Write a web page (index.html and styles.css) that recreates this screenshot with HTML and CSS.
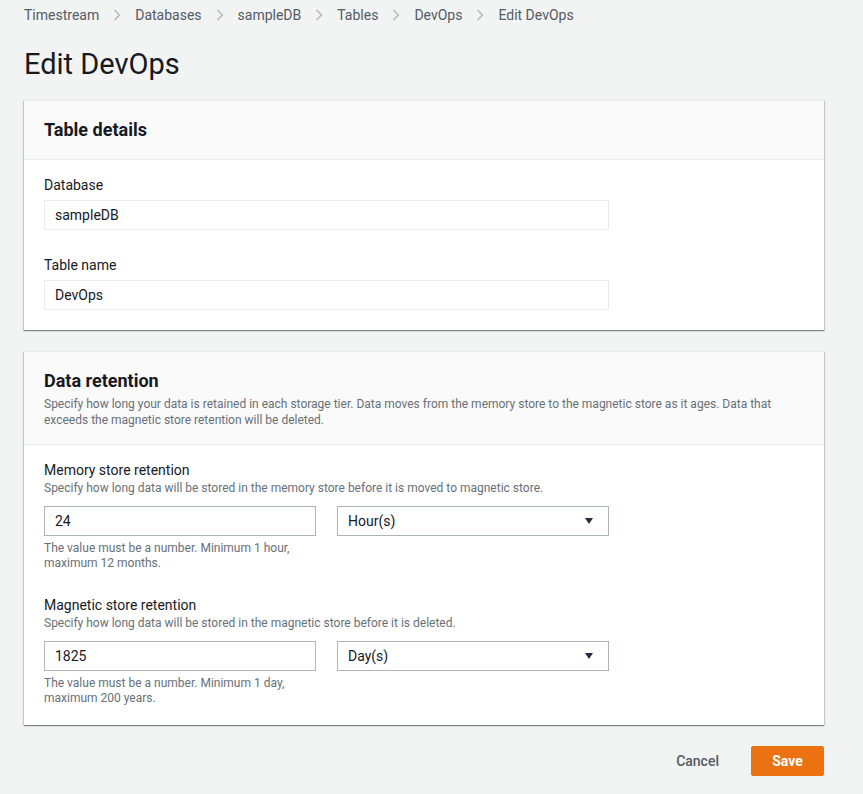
FILE: index.html
```html
<!DOCTYPE html>
<html lang="en">
<head>
<meta charset="utf-8">
<title>Edit DevOps</title>
<link rel="stylesheet" href="styles.css">
</head>
<body>
<div class="page">
  <nav class="breadcrumb">
    <span class="crumb">Timestream</span>
    <span class="sep"><svg width="8" height="12" viewBox="0 0 8 12"><path d="M1.5 1 L6.5 6 L1.5 11" fill="none" stroke="#aab7b8" stroke-width="1.3"/></svg></span>
    <span class="crumb">Databases</span>
    <span class="sep"><svg width="8" height="12" viewBox="0 0 8 12"><path d="M1.5 1 L6.5 6 L1.5 11" fill="none" stroke="#aab7b8" stroke-width="1.3"/></svg></span>
    <span class="crumb">sampleDB</span>
    <span class="sep"><svg width="8" height="12" viewBox="0 0 8 12"><path d="M1.5 1 L6.5 6 L1.5 11" fill="none" stroke="#aab7b8" stroke-width="1.3"/></svg></span>
    <span class="crumb">Tables</span>
    <span class="sep"><svg width="8" height="12" viewBox="0 0 8 12"><path d="M1.5 1 L6.5 6 L1.5 11" fill="none" stroke="#aab7b8" stroke-width="1.3"/></svg></span>
    <span class="crumb">DevOps</span>
    <span class="sep"><svg width="8" height="12" viewBox="0 0 8 12"><path d="M1.5 1 L6.5 6 L1.5 11" fill="none" stroke="#aab7b8" stroke-width="1.3"/></svg></span>
    <span class="crumb current">Edit DevOps</span>
  </nav>

  <h1 class="title">Edit DevOps</h1>

  <section class="panel">
    <div class="panel-header">
      <h2 class="panel-title">Table details</h2>
    </div>
    <div class="panel-body">
      <div class="field">
        <div class="label">Database</div>
        <div class="input readonly wide">sampleDB</div>
      </div>
      <div class="field spaced">
        <div class="label">Table name</div>
        <div class="input readonly wide">DevOps</div>
      </div>
    </div>
  </section>

  <section class="panel second">
    <div class="panel-header tall">
      <h2 class="panel-title">Data retention</h2>
      <p class="panel-desc">Specify how long your data is retained in each storage tier. Data moves from the memory store to the magnetic store as it ages. Data that exceeds the magnetic store retention will be deleted.</p>
    </div>
    <div class="panel-body retention">
      <div class="field">
        <div class="label">Memory store retention</div>
        <div class="desc">Specify how long data will be stored in the memory store before it is moved to magnetic store.</div>
        <div class="row">
          <div class="input half">24</div>
          <div class="input half select">Hour(s)<svg class="caret" width="8" height="6" viewBox="0 0 8 6"><path d="M0 0 H8 L4 6 Z" fill="#232f3e"/></svg></div>
        </div>
        <div class="help">The value must be a number. Minimum 1 hour,<br>maximum 12 months.</div>
      </div>
      <div class="field spaced2">
        <div class="label">Magnetic store retention</div>
        <div class="desc">Specify how long data will be stored in the magnetic store before it is deleted.</div>
        <div class="row">
          <div class="input half">1825</div>
          <div class="input half select">Day(s)<svg class="caret" width="8" height="6" viewBox="0 0 8 6"><path d="M0 0 H8 L4 6 Z" fill="#232f3e"/></svg></div>
        </div>
        <div class="help">The value must be a number. Minimum 1 day,<br>maximum 200 years.</div>
      </div>
    </div>
  </section>

  <div class="actions">
    <button class="btn-link">Cancel</button>
    <button class="btn-primary">Save</button>
  </div>
</div>
</body>
</html>
```

FILE: styles.css
```css
* { box-sizing: border-box; }
html, body { margin: 0; padding: 0; }
body {
  background: #f2f3f3;
  font-family: Roboto, "Liberation Sans", Arial, sans-serif;
  color: #16191f;
}
.page {
  width: 800px;
  margin-left: 24px;
  padding-top: 5px;
}
.breadcrumb {
  display: flex;
  align-items: center;
  height: 20px;
  font-size: 14px;
  line-height: 20px;
  color: #545b64;
}
.crumb { color: #545b64; }
.sep {
  display: inline-flex;
  align-items: center;
  margin: 0 14px 0 14px;
}
.title {
  margin: 21px 0 0 0;
  font-size: 29px;
  line-height: 36px;
  font-weight: 400;
  color: #16191f;
}
.panel {
  margin-top: 18px;
  background: #ffffff;
  box-shadow: 0 1px 1px 0 rgba(0, 28, 36, 0.3), 1px 1px 1px 0 rgba(0, 28, 36, 0.15), -1px 1px 1px 0 rgba(0, 28, 36, 0.15);
  border-top: 1px solid #eaeded;
}
.panel.second { margin-top: 21px; }
.panel-header {
  background: #fafafa;
  border-bottom: 1px solid #eaeded;
  padding: 17px 20px 17px 20px;
}
.panel-header.tall { padding-bottom: 16px; }
.panel-title {
  margin: 0;
  font-size: 18px;
  line-height: 24px;
  font-weight: 700;
  color: #16191f;
}
.panel-desc {
  margin: 3px 0 0 0;
  font-size: 12px;
  line-height: 16px;
  color: #687078;
}
.panel-body {
  padding: 15px 20px 20px 20px;
}
.panel-body.retention { padding-top: 16px; padding-bottom: 19px; }
.field.spaced { margin-top: 25px; }
.field.spaced2 { margin-top: 25px; }
.label {
  font-size: 14px;
  line-height: 20px;
  color: #16191f;
}
.retention .label { line-height: 19px; }
.desc {
  font-size: 12px;
  line-height: 16px;
  color: #687078;
}
.input {
  height: 30px;
  display: flex;
  align-items: center;
  padding: 0 10px;
  font-size: 14px;
  color: #16191f;
  background: #ffffff;
  border: 1px solid #aab7b8;
}
.input.readonly {
  border-color: #eaeded;
  margin-top: 5px;
}
.input.wide { width: 565px; }
.row {
  display: flex;
  gap: 21px;
  margin-top: 10px;
}
.input.half { width: 272px; }
.select {
  justify-content: space-between;
  padding-right: 15px;
}
.caret { display: block; }
.help {
  margin-top: 5px;
  font-size: 12px;
  line-height: 15px;
  color: #687078;
}
.actions {
  display: flex;
  justify-content: flex-end;
  align-items: center;
  gap: 12px;
  margin-top: 21px;
}
.btn-link {
  font-family: inherit;
  font-size: 14px;
  font-weight: 500;
  color: #545b64;
  background: transparent;
  border: none;
  padding: 0 20px;
  height: 30px;
}
.btn-primary {
  font-family: inherit;
  font-size: 14px;
  font-weight: 700;
  color: #ffffff;
  background: #ec7211;
  border: 1px solid #ec7211;
  border-radius: 2px;
  width: 73px;
  height: 30px;
  padding: 0;
}
```
